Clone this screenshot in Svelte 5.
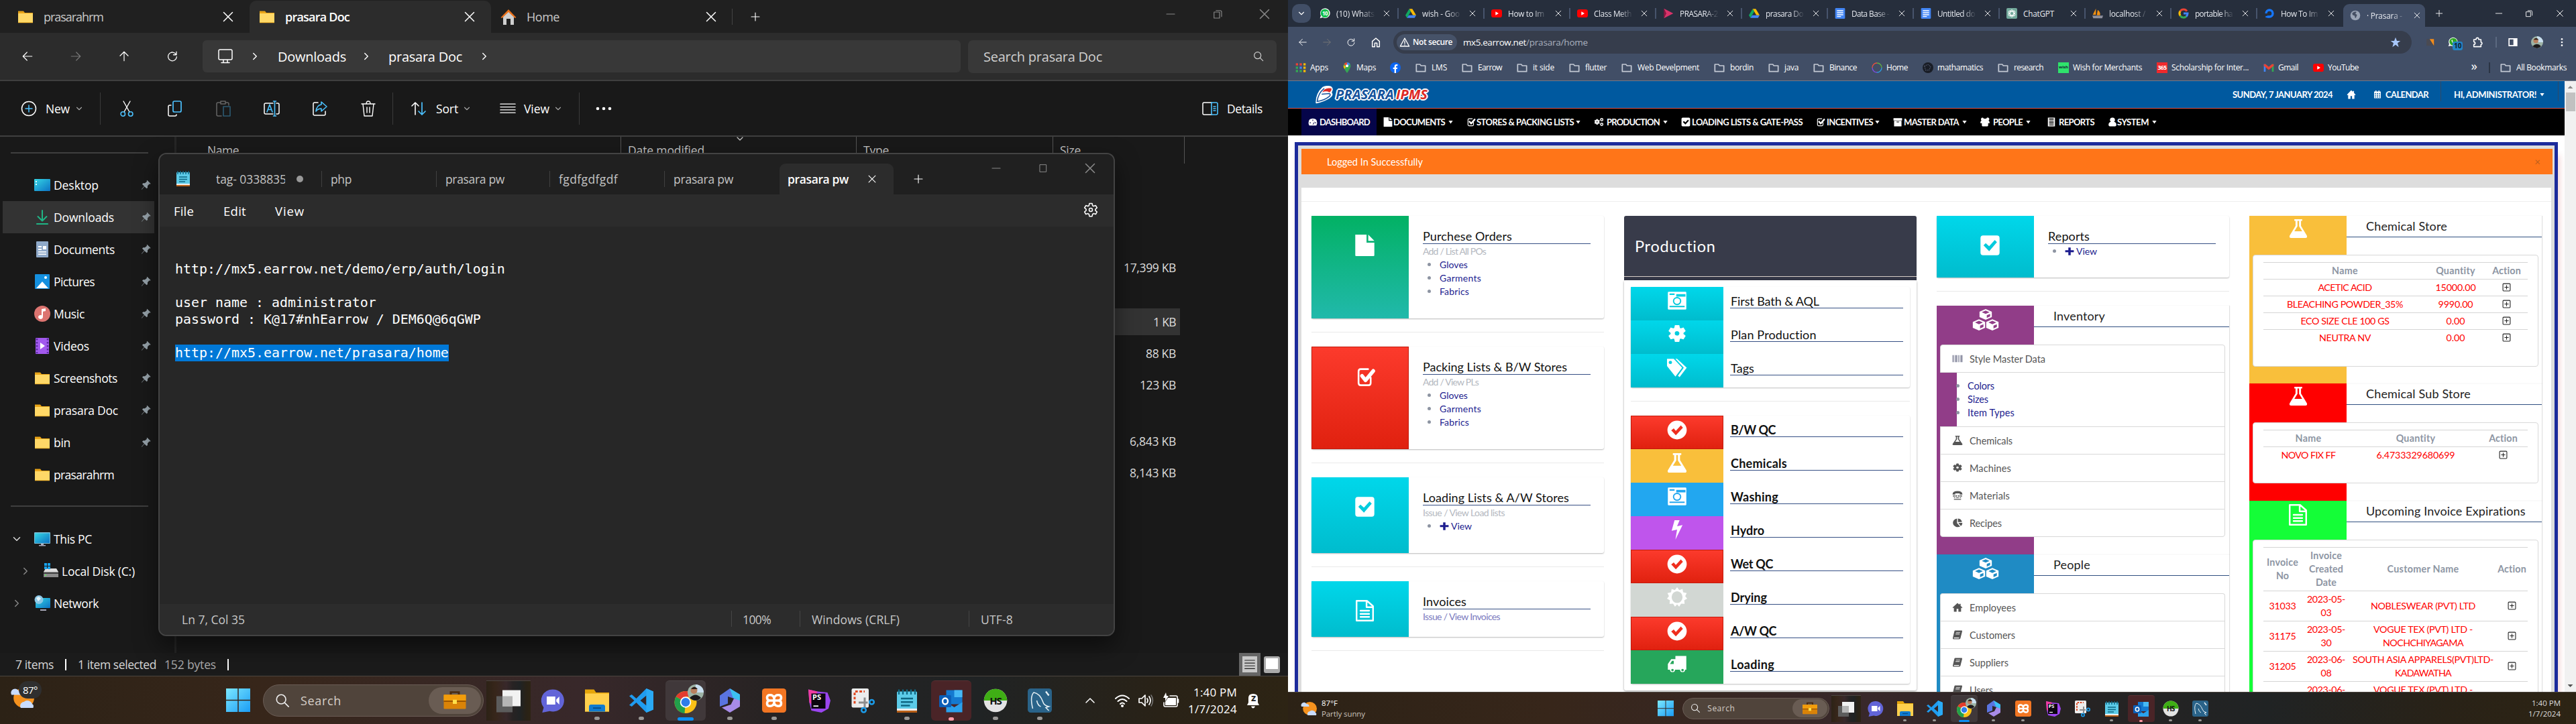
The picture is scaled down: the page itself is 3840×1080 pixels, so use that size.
<script>
  // Tightens or loosens tracking so a label occupies the given width.
  function fit(node, width) {
    if (!width) return;
    const range = document.createRange();
    range.selectNodeContents(node);
    const natural = range.getBoundingClientRect().width;
    const count = node.textContent.length;
    node.style.letterSpacing = ((width - natural) / count).toFixed(3) + 'px';
  }

  const line = (d, w = 1.5, c = 'currentColor') =>
    `<path d="${d}" fill="none" stroke="${c}" stroke-width="${w}" stroke-linecap="round" stroke-linejoin="round"/>`;
  const gearPath =
    'M10 1.500h4l.7 3.200 1.500.9 3.100-1 2 3.400-2.400 2.200v1.800l2.400 2.200-2 3.400-3.100-1-1.500.9-.7 3.200h-4l-.7-3.200-1.500-.9-3.100 1-2-3.400 2.400-2.200v-1.800L2.700 8l2-3.400 3.100 1 1.500-.9z';

  const icons = {
    folder: '<path d="M1 3.500h8l2 2.500h12v15H1z" fill="#e8a317"/><path d="M1 7h22v14H1z" fill="#ffd867"/><path d="M1 20h22v1.200H1z" fill="#f2b632"/>',
    house: '<path d="M4 10 12 4l8 6v14h-5v-9H9v9H4z" fill="#cfcfcf"/><path d="M0.500 13 12 1l11.500 12-2 1L12 5 2.500 14z" fill="#e8701a"/>',
    x: line('M5.500 5.500l13 13M18.500 5.500l-13 13'),
    plus: line('M12 4v16M4 12h16'),
    min: line('M4 12h16'),
    restore: line('M5 8h11v12H5zM9 5h8q3 0 3 3v9'),
    max: line('M5 4h14v16H5z'),
    back: line('M21 12H3M11 4l-8 8 8 8', 1.6),
    fwd: line('M3 12h18M13 4l8 8-8 8', 1.6),
    up: line('M12 21V3M4 11l8-8 8 8', 1.6),
    reload: line('M19.500 8.500A8.500 8.500 0 1 0 20.500 13M20 3v6h-6', 1.7),
    monitor: line('M4 2h16q2 0 2 2v11q0 2-2 2H4q-2 0-2-2V4q0-2 2-2zM9 17v4M15 17v4M6 21.500h12', 1.5),
    right: line('M9 6l6 6-6 6', 1.9),
    down: line('M6 9l6 6 6-6', 1.9),
    upc: line('M4 16l8-8 8 8', 2),
    search: line('M16 16l6 6M17.500 10a7.500 7.500 0 1 1-15 0 7.500 7.500 0 0 1 15 0z', 1.8),
    newc: line('M22.500 12a10.500 10.500 0 1 1-21 0 10.500 10.500 0 0 1 21 0z') + line('M12 7v10M7 12h10', 1.5, '#4cc2ff'),
    cut: line('M7 1l9 16M17 1L8 17', 1.4) + line('M9.500 20a3.200 3.200 0 1 1-6.400 0 3.200 3.200 0 0 1 6.400 0zM20.900 20a3.200 3.200 0 1 1-6.400 0 3.200 3.200 0 0 1 6.400 0z', 1.600, '#4cc2ff'),
    copy: line('M6 7H4q-2 0-2 2v12q0 2 2 2h8q2 0 2-2', 1.5) + line('M11 1h8q2 0 2 2v12q0 2-2 2h-8q-2 0-2-2V3q0-2 2-2z', 1.700, '#4cc2ff'),
    paste: line('M8 3H4q-2 0-2 2v16q0 2 2 2h5M16 3h2q2 0 2 2v2M8 1h7v4H8z', 1.5, '#666') + line('M12 9h10v14H12z', 1.6, '#2c5a72'),
    rename: line('M14 4H3q-2 0-2 2v12q0 2 2 2h11M19 4h2q2 0 2 2v12q0 2-2 2h-2', 1.5) + line('M5 17l4-11 4 11M6.500 13.500h5M16.500 1v22M14.500 1h4M14.500 23h4', 1.600, '#4cc2ff'),
    share: line('M9 3H4q-2 0-2 2v15q0 2 2 2h14q2 0 2-2v-4', 1.5) + line('M14 2l8 7-8 7v-4q-5 0-8 4 1-9 8-10z', 1.600, '#4cc2ff'),
    trash: line('M2 5h20M4 5l2 18h12l2-18M9 5q0-4 3-4t3 4M10 10v8M14 10v8', 1.4),
    sort: line('M7 21V3M2 8l5-5 5 5', 1.6) + line('M17 3v18M12 16l5 5 5-5', 1.700, '#4cc2ff'),
    lines: line('M1 4h22M1 9.500h22M1 15h22M1 20.500h22', 1.6),
    dots: '<g fill="currentColor"><circle cx="3" cy="12" r="2.300"/><circle cx="12" cy="12" r="2.300"/><circle cx="21" cy="12" r="2.300"/></g>',
    details: line('M14 3H3Q1 3 1 5v14q0 2 2 2h11', 1.5) + line('M14 3h7q2 0 2 2v14q0 2-2 2h-7zM17 9h3M17 12h3M17 15h3', 1.6, '#4cc2ff'),
    desktop: '<rect y="3" width="24" height="18" rx="1" fill="url(#gTeal)"/><path d="M2 6h2v2H2zM2 10h2v2H2z" fill="#d8fbff"/>',
    download: line('M12 2v15M5.500 11l6.500 6.500 6.500-6.500', 2, '#1fb585') + line('M4 22h16', 2.200, '#1fb585'),
    docs: '<rect x="3" width="18" height="24" rx="1" fill="#8fa9c9"/><path d="M6 7h5v2H6zM6 11h5v2H6zM13 7h5v5h-5zM6 15h12v1.600H6zM6 18.500h12v1.600H6z" fill="#fff"/>',
    pics: '<rect x="1" y="1" width="22" height="22" rx="1" fill="#1490df"/><path d="M3 22l9-10 9 10z" fill="#fff"/><circle cx="17" cy="6" r="2" fill="#fff"/>',
    music: '<circle cx="12" cy="12" r="12" fill="#dc7470"/><path d="M11 5l6-1v4l-4 .8V17a3.500 3 0 1 1-2-2.800z" fill="#fff"/>',
    video: '<rect x="2" width="20" height="24" rx="1" fill="#a259ee"/><path d="M9 7l7 5-7 5z" fill="#fff"/><path d="M4 1v22M20 1v22" stroke="#5a2ba0" stroke-width="2.500" stroke-dasharray="2.500 2.500"/>',
    pc: '<rect y="2" width="24" height="17" rx="1" fill="#7dbfd9"/><rect x="1" y="3.500" width="22" height="14.500" fill="url(#gTeal)"/><path d="M10 19h4v2h3v1.500H7V21h3z" fill="#aab"/>',
    disk: '<path d="M1 13h22v8H1z" fill="#8c8c8c"/><path d="M1 13l3-5h16l3 5z" fill="#dedede"/><path d="M1 14h22v2H1z" fill="#444"/><path d="M2 0h4v4H2zM7 0h4v4H7zM2 5h4v4H2zM7 5h4v4H7z" fill="#19a4f0"/><circle cx="4" cy="18" r="1" fill="#5f5"/>',
    net: '<rect x="2" y="4" width="22" height="15" rx="1" fill="url(#gTeal)"/><circle cx="7" cy="6.500" r="6.500" fill="#8cc8e6"/><path d="M3 4l4-2 3 3-4 4z" fill="#e5f5fc"/><path d="M9 21h9v2H9z" fill="#aab"/>',
    pin: '<path d="M14 1l8 8-2 1-1-.5-4 4.500v4l-2 2-5-4.500L2 22l-.500-.5 6-7L3 10l2-2h4L13.500 4 13 2.500z" fill="#97a3ab"/>',
    notepad: '<rect x="2" y="3" width="20" height="19" rx="1" fill="#5ccbe8"/><path d="M4 1v5M8 1v5M12 1v5M16 1v5M20 1v5" stroke="#0f6a86" stroke-width="1.500"/><path d="M6 10h12M6 13.500h12M6 17h9" stroke="#0e6783" stroke-width="1.600"/><path d="M2 20h20v2H2z" fill="#eee"/><path d="M2 22h20v2H2z" fill="#b85f17"/>',
    gear: line(gearPath, 1.6) + line('M14.500 11a2.500 2.500 0 1 1-5 0 2.500 2.500 0 0 1 5 0z', 1.5),
    gearf: `<path fill-rule="evenodd" d="${gearPath}M15.500 11a3.500 3.500 0 1 0-7 0 3.500 3.500 0 0 0 7 0z" fill="currentColor" stroke="currentColor" stroke-width="1.500"/>`,
    file: '<path d="M1 0H14v9h9v14q0 1-1 1H2q-1 0-1-1zM16 0l7 7H16z" fill="currentColor"/>',
    checko: line('M18 13v6q0 2.500-2.500 2.500h-9Q4 21.500 4 19V6q0-2.500 2.500-2.500H15', 2) + line('M8 11l4 5 9-10.500', 4.200),
    checks: '<path fill-rule="evenodd" d="M4 1h16q3 0 3 3v16q0 3-3 3H4q-3 0-3-3V4q0-3 3-3zM4.500 12l6.500 6.500L20 8.500l-2.500-2.500-6.500 7-4-3.500z" fill="currentColor"/>',
    filet: line('M2.500 1h12l7 6v16H2.500zM14 1v7h7M7 12h10M7 15.500h10M7 19h10', 1.9),
    washer: '<path fill-rule="evenodd" d="M2 1h20q1 0 1 1v20q0 1-1 1H2q-1 0-1-1V2q0-1 1-1zM3 3v2h6V3zM11 4v3h11V4zM3 20h18v-1.600H3zM17 12.500a5 5 0 1 0-10 0 5 5 0 0 0 10 0zM15.500 12.500a3.500 3.500 0 1 1-7 0 3.500 3.500 0 0 1 7 0z" fill="currentColor"/>',
    tags: '<path fill-rule="evenodd" d="M0 1h8l10 11-8 11L0 10zM6 5.500a2 2 0 1 0-4 0 2 2 0 0 0 4 0z" fill="currentColor"/><path d="M10 1h2l11.500 11-8.500 11.500-2-1.500 7-10z" fill="currentColor"/>',
    checkc: '<path fill-rule="evenodd" d="M23.500 12a11.500 11.500 0 1 1-23 0 11.500 11.500 0 0 1 23 0zM5 12.500l5.500 6L19 9l-2.500-2.800-6 6.800-2.500-3z" fill="currentColor"/>',
    flask: '<path fill-rule="evenodd" d="M7 0h10v2.200h-1.500V8.500L23 21q1 3-2 3H3q-3 0-2-3L8.500 8.500V2.200H7zM11 2.200V9L7 15.500h10L13 9V2.200z" fill="currentColor"/>',
    bolt: '<path d="M9 0h6l-3 7.500 6.500-1.500L10 24l2-12.500-6.500 1.500z" fill="currentColor"/>',
    sun: '<path fill-rule="evenodd" d="M12 0l2.600 3.500L18.500 2l.7 4.300 4.300.9-1.800 3.800L24 14l-3.500 2.200.5 4.300-4.200-.2L14.500 24 12 21.200 9.500 24l-2.300-3.700-4.200.2.500-4.300L0 14l2.300-3L.5 7.200l4.300-.9L5.500 2l3.900 1.500zM18.500 12.200a6.500 7.300 0 1 0-13 0 6.500 7.300 0 0 0 13 0z" fill="currentColor"/>',
    truck: '<path fill-rule="evenodd" d="M10 2h13v17h-1.500a3 3 0 0 1-6 0H9.500a3 3 0 0 1-6 0H1v-7l4-6h5zM3.500 12H8V8H6z" fill="currentColor"/><circle cx="6.500" cy="19.500" r="1.500" fill="#26a65b"/><circle cx="18.500" cy="19.500" r="1.500" fill="#26a65b"/>',
    cubes: '<path fill="currentColor" d="M12 0l5.500 3v6L12 12 6.500 9V3zM6 11.500l5.500 3v6.500L6 24 .5 21v-6.500zM18 11.500l5.500 3v6.500L18 24l-5.500-3v-6.500z"/><g fill="var(--tile)"><path d="M12 1.700l3.500 1.800L12 5.400 8.500 3.500zM13 7l3-1.600v2.800L13 10zM6 13.200l3.500 1.800L6 17l-3.500-2zM7 18.600L10 17v3l-3 1.700zM18 13.200l3.500 1.800-3.500 2-3.500-2zM19 18.600l3-1.600v3l-3 1.700z"/></g>',
    barcode: '<path d="M1 3h2v18H1zM4 3h1v18H4zM7 3h3v18H7zM11 3h1v18h-1zM14 3h2v18h-2zM18 3h1v18h-1zM20 3h3v18h-3z" fill="#7d7f96"/>',
    tty: '<path d="M1 9q0-8 11-8t11 8v1h-6V7H7v3H1zM2 12h4v3H2zM7 12h4v3H7zM13 12h4v3h-4zM18 12h4v3h-4zM4 17h3v2H4zM9 17h6v2H9zM17 17h3v2h-3zM4 21h16v2H4z" fill="currentColor"/>',
    pie: '<path d="M11 1v11.500l7 9A11 11 0 1 1 11 1z" fill="currentColor"/><path d="M13 1q8 1 9 9h-9zM14 12h9q0 5-3.500 8z" fill="currentColor"/>',
    home: '<path d="M12 1l4 4V3h3v5l4 4.500-1.500 1.500L20 12.500V23h-6v-7h-4v7H4V12.500L2.500 14 1 12.500z" fill="currentColor"/>',
    book: '<path fill-rule="evenodd" d="M7 1h14q2 0 1.500 2l-4 18q-.5 2-2.500 2H3q-2 0-1.500-3L5 3q.5-2 2-2zM9 5l-.5 1.500h9L18 5zM8 9l-.5 1.500h9L17 9zM4 19v2h11l1-2z" fill="currentColor"/>',
    plusb: '<path d="M9 2h6v7h8v5h-8v8H9v-8H1V9h8z" fill="currentColor"/>',
    plussq: line('M4 2h16q2 0 2 2v16q0 2-2 2H4q-2 0-2-2V4q0-2 2-2zM12 7v10M7 12h10', 2),
    dash: '<path fill-rule="evenodd" d="M1 14Q1 3 12 3t11 11q0 4-2 7H3q-2-3-2-7zM11 6v3h2V6zM4 13v2h3v-2zM17 13v2h3v-2zM11 18h3l3-8-4 6z" fill="currentColor"/>',
    cogs: `<g transform="scale(.68) translate(0 6)"><path fill-rule="evenodd" d="${gearPath}M15 11a3 3 0 1 0-6 0 3 3 0 0 0 6 0z" fill="currentColor" stroke="currentColor" stroke-width="2"/></g><circle cx="20" cy="6" r="3" stroke="currentColor" stroke-width="2.500" fill="none"/><circle cx="20" cy="18" r="3" stroke="currentColor" stroke-width="2.500" fill="none"/>`,
    box: '<path fill-rule="evenodd" d="M1 2h22v6H1zM2.500 9h19v14h-19zM9 11v2h6v-2z" fill="currentColor"/>',
    people: '<path d="M6 1a4 4 0 0 1 3 3q3-2 6 0a4 4 0 1 1 6 4q3 2 3 7h-4v6q0 2-2 2H6q-2 0-2-2v-6H0q0-5 3-7a4 4 0 0 1 3-7z" fill="currentColor"/>',
    server: '<path fill-rule="evenodd" d="M3 1h18v22H3zM6 3v3h12V3zM6 8.500v2h12v-2zM6 13v3h12v-3zM6 18.500v2h12v-2z" fill="currentColor"/>',
    person: '<path d="M12 1a5.500 5.500 0 0 1 4 10q6 2 6 8 0 4-3 4H5q-3 0-3-4 0-6 6-8a5.500 5.500 0 0 1 4-10z" fill="currentColor"/>',
    cal: '<path fill-rule="evenodd" d="M2 3h20v20H2zM4 8v2.500h3.500V8zM10 8v2.500h4V8zM16.500 8v2.500H20V8zM4 13v2.500h3.500V13zM10 13v2.500h4V13zM16.500 13v2.500H20V13zM4 18v2.500h3.500V18zM10 18v2.500h4V18zM16.500 18v2.500H20V18zM6 0h3v3H6zM15 0h3v3h-3z" fill="currentColor"/>',
    fold: line('M2 4.500h8l2.500 3H22v13H2z', 2.600, '#c3c9d4'),
    whats: '<path d="M1 23l2-6A11 11 0 1 1 7 21z" fill="#fff"/><circle cx="12" cy="11.700" r="9.500" fill="#0fc04b"/>',
    drive: '<path d="M8.500 2h7L24 16h-7z" fill="#fbbc04"/><path d="M8.500 2L0 16l3.500 6L12 8z" fill="#11a861"/><path d="M7.500 16H24l-3.500 6h-17z" fill="#4285f4"/>',
    yt: '<rect y="3" width="24" height="18" rx="5" fill="#f00"/><path d="M9.500 8l7 4-7 4z" fill="#fff"/>',
    pras: '<path d="M2 1l21 11L2 23l5-11z" fill="#d9336a"/><path d="M2 1l5 11-5 11z" fill="#8c1640"/>',
    gdoc: '<rect x="1" width="22" height="24" rx="2" fill="#4285f4"/><path d="M5 6h14M5 10.500h14M5 15h14M5 19h9" stroke="#fff" stroke-width="2"/>',
    gpt: '<rect width="24" height="24" rx="3" fill="#74aa9c"/><g fill="none" stroke="#fff" stroke-width="1.400"><ellipse cx="12" cy="12" rx="4" ry="8"/><ellipse cx="12" cy="12" rx="4" ry="8" transform="rotate(60 12 12)"/><ellipse cx="12" cy="12" rx="4" ry="8" transform="rotate(120 12 12)"/></g>',
    sail: '<path d="M8 1v14H1zM12 4q7 5 5 12h-7z" fill="#f29111"/><path d="M0 17h24l-2 6H2z" fill="#8d8f9c"/>',
    google: '<g fill="none" stroke-width="4.500"><path d="M19.500 7A9 9 0 0 0 4.500 7" stroke="#ea4335"/><path d="M4.500 7a9 9 0 0 0 0 10" stroke="#fbbc05"/><path d="M4.500 17a9 9 0 0 0 13.500 2" stroke="#34a853"/><path d="M18 19q3-3 3-7h-9" stroke="#4285f4"/></g>',
    ocean: '<path d="M12 2a10 10 0 1 1 0 20v-5a5 5 0 1 0-5-5H2A10 10 0 0 1 12 2z" fill="#1677ff"/><path d="M7 17h5v5H7zM3.500 18H7v3.500H3.500z" fill="#1677ff"/>',
    globe: '<circle cx="12" cy="12" r="11" fill="#9aa4b5"/><path d="M5 7q6-5 10-3l-3 4 4 3-3 7q-3-1-2-5l-5-2z" fill="#454f63"/>',
    homeo: line('M4 10l8-7 8 7v12h-5.500v-8h-5v8H4z', 2.2),
    warn: line('M12 3L2 21h20zM12 9v6M12 18v.2', 2),
    star: '<path d="M12 1l3 8h8l-6.500 5L19 23l-7-5.500L5 23l2.500-9L1 9h8z" fill="#a8c7fa"/>',
    ext: '<rect x="2" y="4" width="20" height="17" fill="#4a4a52"/><path d="M10 4h11v17z" fill="#f28c1c"/>',
    wh: '<path d="M1 21l2-5A10 10 0 1 1 7 20z" fill="#fff"/><circle cx="12" cy="11" r="8.500" fill="#2ea721"/><path d="M8 7q1 8 8 8l1-2-3-1.500-1 1q-2-1-3-3l1-1-1-2z" fill="#fff"/>',
    puzzle: line('M4 6h5q0-4 3-4t3 4h5v6q2.500 0 2.500 2.500T20 17v5H4v-5q3 0 3-2.800T4 11z', 2.400),
    side: '<path fill-rule="evenodd" d="M2 3h20v18H2zM4.500 5.500v13H13v-13z" fill="#fff"/>',
    avatar: '<circle cx="12" cy="12" r="12" fill="#9db3a6"/><path d="M12 0a12 12 0 0 1 12 12H12z" fill="#c9dff0"/><path d="M3 20q9-9 17 0-8 8-17 0z" fill="#1d1a1c"/><circle cx="9.500" cy="9" r="5" fill="#b9805f"/><path d="M5 7q5-7 10 0z" fill="#2b1d18"/>',
    menu: '<g fill="#fff"><circle cx="12" cy="4" r="2.300"/><circle cx="12" cy="12" r="2.300"/><circle cx="12" cy="20" r="2.300"/></g>',
    apps: '<path d="M1 2h5v5H1z" fill="#ea4335"/><path d="M9.500 2h5v5h-5z" fill="#ea4335"/><path d="M18 2h5v5h-5z" fill="#fbbc04"/><path d="M1 9.500h5v5H1z" fill="#34a853"/><path d="M9.500 9.500h5v5h-5z" fill="#4285f4"/><path d="M18 9.500h5v5h-5z" fill="#fbbc04"/><path d="M1 17h5v5H1z" fill="#34a853"/><path d="M9.500 17h5v5h-5z" fill="#34a853"/><path d="M18 17h5v5h-5z" fill="#fbbc04"/>',
    map: '<path d="M12 0a8 8 0 0 1 8 8q0 5-8 16Q4 13 4 8a8 8 0 0 1 8-8z" fill="#34a853"/><path d="M12 0a8 8 0 0 0-7 4l7 5z" fill="#ea4335"/><path d="M12 0a8 8 0 0 1 7 4l-7 5z" fill="#4285f4"/><path d="M4.500 6l5 4-3 5Q3 10 4.500 6z" fill="#fbbc04"/><circle cx="12" cy="8" r="3" fill="#fff"/>',
    fb: '<circle cx="12" cy="12" r="12" fill="#0b66f2"/><path d="M10 24v-9H7v-3.500h3V9q0-4.500 4.500-4.500H17V8h-2q-1.500 0-1.500 1.500v2h3.300L16 15h-2.500v9z" fill="#fff"/>',
    ring: '<g fill="none" stroke-width="2"><path d="M12 1.500a10.500 10.500 0 0 0-10.500 10.500" stroke="#f0503c"/><path d="M12 1.500A10.500 10.500 0 0 1 22.500 12" stroke="#5fb043"/><path d="M1.500 12A10.500 10.500 0 0 0 12 22.500" stroke="#7a4fe0"/><path d="M22.500 12A10.500 10.500 0 0 1 12 22.500" stroke="#2d9be0"/></g>',
    ball: '<circle cx="12" cy="12" r="12" fill="#191d26"/><path d="M4 8l8-3 6 4-3 8-8 1z" fill="none" stroke="#67708a" stroke-width="1.500" stroke-dasharray="2 2"/>',
    gmail: '<path d="M1 4h4v17H1z" fill="#4285f4"/><path d="M19 4h4v17h-4z" fill="#34a853"/><path d="M1 4l4 0 7 6 7-6h4v4l-11 9L1 8z" fill="#ea4335"/>',
    weather: '<circle cx="14" cy="12" r="10" fill="#f5921e"/><path d="M2 9a4 4 0 0 1 7-4q4 0 4 4z" fill="#c8dcff"/><path d="M11 22a4 4 0 0 1 3-6 5 5 0 0 1 8 2q2 1 1 4z" fill="#c8dcff"/>',
    win: '<g fill="url(#gWin)"><path d="M0 0h11.500v11.500H0zM12.500 0H24v11.500H12.500zM0 12.500h11.500V24H0zM12.500 12.500H24V24H12.500z"/></g>',
    brief: '<path d="M8 5V2h8v3" fill="none" stroke="#4b2b10" stroke-width="2"/><rect x="1" y="5" width="22" height="17" rx="1" fill="#d98308"/><path d="M1 5h22v7H1z" fill="#f29d0c"/><path d="M1 12h22v1.500H1z" fill="#9c5500"/><rect x="10" y="11" width="4" height="5" fill="#ffe04a"/>',
    task: '<path d="M0 7h16v16H0z" fill="#5c5c5c"/><path d="M6 1h18v16H6z" fill="#f2f2f2"/><path d="M6 7h10v10H6z" fill="#b5b5b5"/>',
    chat: '<path d="M12 1a11 11 0 1 1-3 21.500L1.500 24 3 19A11 11 0 0 1 12 1z" fill="#6264d8"/><path d="M6 8h8.500v8H6zM15.500 11l3-3v8l-3-3z" fill="#fff"/>',
    expl: '<path d="M0 1h9l2 3h13v19H0z" fill="#e5a50a"/><path d="M0 5h24v18H0z" fill="#ffd04d"/><path d="M4 23v-5q0-2 2-2h12q2 0 2 2v5z" fill="#0f7bd0"/><path d="M8 19.500h8" stroke="#064a84" stroke-width="1.200"/>',
    code: '<path d="M17 0l7 3v18l-7 3L7 14l-4.500 4L0 16.500 5 12 0 7.500 2.500 6 7 10zM17 7l-6 5 6 5z" fill="#1f9cf0" fill-rule="evenodd"/><path d="M17 0l7 3v18l-7 3z" fill="#2aaaf5"/>',
    chrome: '<circle cx="12" cy="13" r="11" fill="#fbc116"/><path d="M12 13L2.500 7.500A11 11 0 0 1 21.500 7.500H12z" fill="#e33b2e"/><path d="M12 13l-1 11A11 11 0 0 1 2.500 7.500z" fill="#22a04b"/><circle cx="12" cy="13" r="5.500" fill="#fff"/><circle cx="12" cy="13" r="4.300" fill="#2f7de9"/>',
    m365: '<path d="M12 0l10 6v7l-6-3-6-2v7L2 18V7z" fill="#5a74e0"/><path d="M12 0l10 6v7l-7-4z" fill="#3cc0f2"/><path d="M22 12v6l-10 6-8-5 9-3 3-6z" fill="#a88be8"/>',
    xampp: '<rect width="24" height="24" rx="3" fill="#f37623"/><path d="M8 6.500q-3 0-3 2.700T8 12q-3 0-3 2.800t3 2.700 4-3V9.500q1-3 4-3t3 2.700T16 12q3 0 3 2.800t-3 2.700-4-3V9.500q-1-3-4-3zM8 12h8" fill="none" stroke="#fff" stroke-width="2.400"/>',
    ps: '<path d="M2 1l9 2 10 1 3 8-2 8-7 4-10-2-2-8z" fill="#9b45f0"/><path d="M2 1l9 2-5 13-3-2z" fill="#f03ca0"/><rect x="5" y="5" width="14" height="15" fill="#0b0610"/><path d="M7 17.500h5" stroke="#fff" stroke-width="1.200"/>',
    snip: '<rect x="1" width="17" height="19" rx="1.500" fill="#ececec"/><path d="M4 15V3h10" fill="none" stroke="#e0461f" stroke-width="2" stroke-dasharray="2.500 1.700"/><path d="M14 9v10M8 14h9" stroke="#8d8d8d" stroke-width="2"/><circle cx="21" cy="13.500" r="2.200" fill="none" stroke="#1b9be8" stroke-width="1.700"/><circle cx="13" cy="21.500" r="2.200" fill="none" stroke="#1b9be8" stroke-width="1.700"/>',
    outlook: '<path d="M7 1h16v14H7z" fill="#1479d0"/><path d="M15 1h8v7h-8z" fill="#47b8f5"/><path d="M7 13l8 5 8-5v10H7z" fill="#2aa0ec"/><rect y="6" width="12" height="12" rx="1" fill="#0c5fb8"/><ellipse cx="6" cy="12" rx="2.600" ry="3" fill="none" stroke="#fff" stroke-width="1.600"/>',
    hs: '<circle cx="12" cy="12" r="11.500" fill="#e3e3e3"/><path d="M.5 12a11.500 11.500 0 0 1 23 0z" fill="#3fae15"/>',
    mysql: '<rect width="24" height="24" rx="3" fill="#2a6389"/><path d="M5 20Q2 8 6 4q6 1 9 9 1 4 6 5l-3 1 3 3M9 12q1 5 4 6" fill="none" stroke="#e6f0f5" stroke-width="1"/><path d="M18 3l3 4" stroke="#e6f0f5" stroke-width="1.600"/>',
    wifi: line('M2 9q10-9 20 0M5.500 13q6.500-6 13 0M9 17q3-3 6 0', 2) + '<circle cx="12" cy="20" r="2" fill="currentColor"/>',
    sound: line('M2 9h4l5-5v16l-5-5H2zM14 9q2 3 0 6M17 6q4 6 0 12', 1.7) + line('M20 4q5 8 0 16', 1.500, '#777'),
    batt: '<path fill="currentColor" d="M8 8h12v11H4v-5z"/>' + line('M11 5h9q2 0 2 2v12q0 2-2 2H4q-2 0-2-2v-4M23.500 10v5', 1.6) + '<path d="M5 0L1 8h3v5l5-8H6z" fill="currentColor"/>',
    bell: '<path d="M5 8q0-6 7-6t7 6v7l2 4H3l2-4zM9 20.500h6q-1 3-3 3t-3-3z" fill="currentColor"/>'
  };

  const quick = [
    ['desktop', 'Desktop', 67], ['download', 'Downloads', 90], ['docs', 'Documents', 91], ['pics', 'Pictures', 61],
    ['music', 'Music', 46], ['video', 'Videos', 53], ['folder', 'Screenshots', 95], ['folder', 'prasara Doc', 96],
    ['folder', 'bin', 25], ['folder', 'prasarahrm', 90]
  ];
  const noteTabs = [['php', 31, 171], ['prasara pw', 88, 169], ['fgdfgdfgdf', 88, 171], ['prasara pw', 89, 172]];
  const toolIcons = ['cut', 'copy', 'paste', 'rename', 'share', 'trash'];
  const apps = ['task', 'chat', 'expl', 'code', 'chrome', 'm365', 'xampp', 'ps', 'snip', 'notepad', 'outlook', 'hs', 'mysql'];
  const running = ['expl', 'code', 'm365', 'xampp', 'notepad', 'outlook', 'hs', 'mysql'];

  const webTabs = [
    ['whats', '(10) Whats', 57], ['drive', 'wish - Goo', 56], ['yt', 'How to Im', 54], ['yt', 'Class Meth', 56],
    ['pras', 'PRASARA-2', 57], ['drive', 'prasara Do', 56], ['gdoc', 'Data Base -', 56], ['gdoc', 'Untitled do', 56],
    ['gpt', 'ChatGPT', 46], ['sail', 'localhost /', 54], ['google', 'portable ha', 56], ['ocean', 'How To Im', 55]
  ];
  const marks = [
    ['apps', 'Apps', 27], ['map', 'Maps', 29], ['fb', '', 0], ['fold', 'LMS', 23], ['fold', 'Earrow', 36], ['fold', 'it side', 32],
    ['fold', 'flutter', 32], ['fold', 'Web Develpment', 92], ['fold', 'bordin', 35], ['fold', 'java', 21], ['fold', 'Binance', 41],
    ['ring', 'Home', 32], ['ball', 'mathamatics', 68], ['fold', 'research', 44], ['wish', 'Wish for Merchants', 103],
    ['n365', 'Scholarship for Inter...', 115], ['gmail', 'Gmail', 30], ['yt', 'YouTube', 46]
  ];
  // icon, icon advance, label, label width, caret gap (0 = no caret)
  const menu = [
    ['dash', 17, 'DASHBOARD', 75, 0], ['file', 15, 'DOCUMENTS', 77, 5], ['checko', 15, 'STORES & PACKING LISTS', 145, 3],
    ['cogs', 19, 'PRODUCTION', 79, 5], ['checks', 16, 'LOADING LISTS & GATE-PASS', 165, 0], ['checko', 16, 'INCENTIVES', 69, 3],
    ['box', 16, 'MASTER DATA', 82, 5], ['people', 19, 'PEOPLE', 44, 5], ['server', 18, 'REPORTS', 53, 0], ['person', 14, 'SYSTEM', 47, 5]
  ];
  const three = [['Gloves', 42], ['Garments', 62], ['Fabrics', 44]];
  const cards = [
    { cls: 'green h153', icon: 'file', title: 'Purchese Orders', w: 133, sub: 'Add / List All POs', sw: 94, items: three },
    { cls: 'red h153', icon: 'checko', title: 'Packing Lists & B/W Stores', w: 215, sub: 'Add / View PLs', sw: 83, items: three },
    { cls: 'cyan h113', icon: 'checks', title: 'Loading Lists & A/W Stores', w: 218, sub: 'Issue / View Load lists', sw: 122, view: true },
    { cls: 'cyan h83', icon: 'filet', title: 'Invoices', w: 65, sub: 'Issue / View Invoices', sw: 115, link: true }
  ];
  const prep = [['cyan', 'washer', 'First Bath & AQL', 132], ['cyan', 'gearf', 'Plan Production', 128], ['cyan', 'tags', 'Tags', 35]];
  const steps = [
    ['red', 'checkc', 'B/W QC', 67], ['amber', 'flask', 'Chemicals', 84], ['sky', 'washer', 'Washing', 71], ['violet', 'bolt', 'Hydro', 50],
    ['red', 'checkc', 'Wet QC', 63], ['grey', 'sun', 'Drying', 54], ['red', 'checkc', 'A/W QC', 68], ['leaf', 'truck', 'Loading', 65]
  ];
  const stock = [['flask', 'Chemicals', 64], ['gearf', 'Machines', 62], ['tty', 'Materials', 60], ['pie', 'Recipes', 48]];
  const folk = [['home', 'Employees', 69], ['book', 'Customers', 68], ['book', 'Suppliers', 58], ['book', 'Users', 35]];
  const chem = [
    ['ACETIC ACID', 80, '15000.00', 60], ['BLEACHING POWDER_35%', 173, '9990.00', 52],
    ['ECO SIZE CLE 100 GS', 132, '0.00', 28], ['NEUTRA NV', 77, '0.00', 28]
  ];
  const invoices = [
    ['31033', '2023-05-', '03', [['NOBLESWEAR (PVT) LTD', 156]]],
    ['31175', '2023-05-', '30', [['VOGUE TEX (PVT) LTD -', 148], ['NOCHCHIYAGAMA', 120]]],
    ['31205', '2023-06-', '08', [['SOUTH ASIA APPARELS(PVT)LTD-', 210], ['KADAWATHA', 84]]],
    ['31206', '2023-06-', '08', [['VOGUE TEX (PVT) LTD -', 148], ['NOCHCHIYAGAMA', 120]]]
  ];
</script>

{#snippet ic(name, cls = 'i20')}<svg class="ic {cls}" viewBox="0 0 24 24" preserveAspectRatio="none">{@html icons[name]}</svg>{/snippet}
{#snippet t(text, w = 0, cls = '')}<span class="t {cls}" use:fit={w}>{text}</span>{/snippet}

{#snippet tray(big)}
  <div class="dock">
    <div class="logo">{@render ic('win', 'full')}</div>
    <div class="pill">
      <div class="lens">{@render ic('search', 'full')}</div>
      {@render t('Search', big ? 61 : 41)}
      <div class="case"><div class="caseicon">{@render ic('brief', 'full')}</div></div>
    </div>
    <div class="apps">
      {#each apps as a}
        <div class="app {a}">
          <div class="appicon">
            {@render ic(a, 'full')}
            {#if a === 'ps'}<b class="psmark">PS</b>{/if}
            {#if a === 'hs'}<b class="hsmark">HS</b>{/if}
            {#if a === 'chrome'}<div class="face">{@render ic('avatar', 'full')}</div>{/if}
          </div>
          <i class="dot" class:on={running.includes(a)} class:wide={a === 'chrome'}></i>
        </div>
      {/each}
    </div>
  </div>
{/snippet}

{#snippet navrow(icon, label, w)}
  <div class="navrow"><span class="ni">{@render ic(icon, 'i24')}</span>{@render t(label, w)}</div>
{/snippet}

{#snippet step(s, strong)}
  <div class="step">
    <div class="stile {s[0]}">{@render ic(s[1], 'w32')}</div>
    <div class="sbody"><div class="stitle" class:strong>{@render t(s[2], s[3])}</div></div>
  </div>
{/snippet}

<svg class="defs" width="0" height="0">
  <defs>
    <linearGradient id="gTeal" x1="0" y1="0" x2="1" y2="1"><stop offset="0" stop-color="#35d6e4" /><stop offset="1" stop-color="#0c72c4" /></linearGradient>
    <linearGradient id="gWin" x1="0" y1="0" x2="1" y2="1"><stop offset="0" stop-color="#7ce8ff" /><stop offset="1" stop-color="#1a9cf5" /></linearGradient>
  </defs>
</svg>

<div class="desk">
  <section class="screen left">
    <div class="ftabs">
      <div class="ftab">{@render ic('folder', 'i24')}{@render t('prasarahrm', 89)}{@render ic('x', 'i24 end')}</div>
      <div class="ftab on">{@render ic('folder', 'i24')}{@render t('prasara Doc', 96)}{@render ic('x', 'i24 end')}</div>
      <div class="ftab last">{@render ic('house', 'i24')}{@render t('Home', 49)}{@render ic('x', 'i24 end')}</div>
      <div class="cell plus">{@render ic('plus', 'i20')}</div>
      <div class="wctl">
        <div class="cell">{@render ic('min', 'i20')}</div>
        <div class="cell">{@render ic('restore', 'i20')}</div>
        <div class="cell">{@render ic('x', 'i24')}</div>
      </div>
    </div>
    <div class="fnav">
      <div class="cell">{@render ic('back', 'i20')}</div>
      <div class="cell dim">{@render ic('fwd', 'i20')}</div>
      <div class="cell">{@render ic('up', 'i20')}</div>
      <div class="cell">{@render ic('reload', 'i20')}</div>
      <div class="addr">
        {@render ic('monitor', 'i24')}{@render ic('right', 'i20')}{@render t('Downloads', 102)}{@render ic('right', 'i20')}{@render t('prasara Doc', 110)}{@render ic('right', 'i20')}
      </div>
      <div class="find">{@render t('Search prasara Doc', 177)}{@render ic('search', 'i16')}</div>
    </div>
    <div class="ftools">
      {@render ic('newc', 'i24')}{@render t('New', 36)}{@render ic('down', 'i16')}<i class="bar"></i>
      {#each toolIcons as n}<div class="cell">{@render ic(n, 'i24')}</div>{/each}
      <i class="bar"></i>{@render ic('sort', 'i24')}{@render t('Sort', 33)}{@render ic('down', 'i16')}
      {@render ic('lines', 'i24 flat')}{@render t('View', 38)}{@render ic('down', 'i16')}<i class="bar"></i>
      {@render ic('dots', 'i24')}{@render ic('details', 'i24')}{@render t('Details', 53)}
    </div>
    <div class="fmain">
      <aside>
        <hr class="top" />
        {#each quick as q, n}
          <div class="qrow" class:sel={n === 1}>
            {@render ic(q[0], 'i24')}{@render t(q[1], q[2])}
            {#if n < 9}{@render ic('pin', 'i16 end')}{/if}
          </div>
        {/each}
        <hr class="mid" />
        <div class="tree open">{@render ic('down', 'i20')}{@render ic('pc', 'i24')}{@render t('This PC', 57)}</div>
        <div class="tree sub">{@render ic('right', 'i20')}{@render ic('disk', 'i24')}{@render t('Local Disk (C:)', 109)}</div>
        <div class="tree">{@render ic('right', 'i20')}{@render ic('net', 'i24')}{@render t('Network', 67)}</div>
      </aside>
      <div class="files">
        <div class="fhead">
          <span>{@render t('Name', 47)}</span><span>{@render t('Date modified', 114)}<em>{@render ic('down', 'i16')}</em></span><span>{@render t('Type', 38)}</span><span>{@render t('Size', 31)}</span>
        </div>
        <div class="sizes">
          <p>{@render t('17,399 KB', 78)}</p>
          <p class="pick">{@render t('1 KB', 34)}</p>
          <p>{@render t('88 KB', 45)}</p>
          <p>{@render t('123 KB', 54)}</p>
          <p>{@render t('6,843 KB', 69)}</p>
          <p>{@render t('8,143 KB', 69)}</p>
        </div>
      </div>
    </div>
    <div class="fstat">
      {@render t('7 items', 57)}<i></i>{@render t('1 item selected', 117)}{@render t('152 bytes', 77, 'faint')}<i></i>
      <div class="modes"><b class="m1">{@render ic('lines', 'full')}</b><b class="m2"></b></div>
    </div>

    <div class="note">
      <div class="ntabs">
        <div class="nicon">{@render ic('notepad', 'i24')}</div>
        <div class="ntab first">{@render t('tag- 0338835', 105, 'clip')}<i class="bullet"></i></div>
        {#each noteTabs as n, k}<div class="ntab n{k}">{@render t(n[0], n[1])}</div>{/each}
        <div class="ntab on">{@render t('prasara pw', 91)}{@render ic('x', 'i20')}</div>
        <div class="cell nplus">{@render ic('plus', 'i20')}</div>
        <div class="wctl">
          <div class="cell">{@render ic('min', 'i20')}</div>
          <div class="cell">{@render ic('max', 'i16')}</div>
          <div class="cell">{@render ic('x', 'i24')}</div>
        </div>
      </div>
      <div class="nmenu">{@render t('File', 30)}{@render t('Edit', 34)}{@render t('View', 44)}{@render ic('gear', 'i24')}</div>
      <div class="ntext">
        <p>http://mx5.earrow.net/demo/erp/auth/login</p>
        <p></p>
        <p>user name : administrator</p>
        <p>password : K@17#nhEarrow / DEM6Q@6qGWP</p>
        <p></p>
        <p><mark>http://mx5.earrow.net/prasara/home</mark></p>
      </div>
      <div class="nstat">{@render t('Ln 7, Col 35', 94)}{@render t('100%', 42)}{@render t('Windows (CRLF)', 131)}{@render t('UTF-8', 48)}</div>
    </div>

    <footer class="task big">
      <div class="wx"><div class="wxi">{@render ic('weather', 'full')}</div><b>87°</b></div>
      {@render tray(true)}
      <div class="sys">
        {@render ic('upc', 'i20')}{@render ic('wifi', 'i24')}{@render ic('sound', 'i24')}{@render ic('batt', 'i24')}
        <div class="clock">{@render t('1:40 PM', 65)}{@render t('1/7/2024', 73)}</div>
        <div class="bell">{@render ic('bell', 'i24')}<b>z</b></div>
      </div>
    </footer>
  </section>

  <section class="screen right">
    <div class="web">
      <div class="wtabs">
        <div class="drop">{@render ic('down', 'i14')}</div>
        {#each webTabs as w, n}
          <div class="wtab">{@render ic(w[0], 'i16')}{#if n === 0}<b class="ten">10</b>{/if}<span class="fade" class:whole={n === 8}>{@render t(w[1], w[2])}</span>{@render ic('x', 'i14')}</div>
        {/each}
        <div class="wtab on">{@render ic('globe', 'i16')}<span class="fade">{@render t('· Prasara -', 53)}</span>{@render ic('x', 'i14')}</div>
        <div class="wplus">{@render ic('plus', 'i14')}</div>
        <div class="wwin">{@render ic('min', 'i14')}{@render ic('restore', 'i14')}{@render ic('x', 'i16')}</div>
      </div>
      <div class="wnav">
        {@render ic('back', 'i14')}{@render ic('fwd', 'i14 dim')}{@render ic('reload', 'i14')}{@render ic('homeo', 'i16')}
        <div class="omni">
          <div class="chip">{@render ic('warn', 'i16')}{@render t('Not secure', 59)}</div>
          {@render t('mx5.earrow.net', 94)}{@render t('/prasara/home', 92, 'path')}
          {@render ic('star', 'i16 end')}
        </div>
        <div class="exts">
          {@render ic('ext', 'i14')}<div class="whx">{@render ic('wh', 'i16')}<b>10</b></div>{@render ic('puzzle', 'i16')}<i></i>{@render ic('side', 'i16')}{@render ic('avatar', 'i20')}{@render ic('menu', 'i14')}
        </div>
      </div>
      <div class="marks">
        {#each marks as m}
          <div class="mark" class:f={m[0] === 'fold'}>
            {#if m[0] === 'wish'}<b class="wish">wish</b>{:else if m[0] === 'n365'}<b class="n365">365</b>{:else}{@render ic(m[0], 'i16')}{/if}
            {#if m[1]}{@render t(m[1], m[2])}{/if}
          </div>
        {/each}
        <span class="more">»</span><i class="mdiv"></i>
        <div class="mark f">{@render ic('fold', 'i16')}{@render t('All Bookmarks', 75)}</div>
      </div>
      <div class="view">
        <div class="page">
          <header>
            <div class="brand">
              <svg class="blogo" viewBox="0 0 30 28"><path d="M2 26Q2 12 12 3q6-3 12-1 4 3 0 8 4 4-2 8-8 5-20 8z" fill="#fff" stroke="#fff" stroke-width="2.5" stroke-linejoin="round" /><path d="M3 25Q4 12 14 4M10 13l12-1q3 2-1 5-6 5-17 7" fill="none" stroke="#15539c" stroke-width="1.6" /><path d="M11 10q4-8 14-6 1 4-3 6-5-3-11 0z" fill="#dd2a25" /></svg>
              <span class="btext">{@render t('PRASARA', 87)}</span><span class="btext hot">{@render t('IPMS', 47)}</span>
            </div>
            <div class="hright">
              {@render t('SUNDAY, 7 JANUARY 2024', 149)}{@render ic('home', 'i14')}{@render ic('cal', 'i12')}{@render t('CALENDAR', 64)}
              <div class="user">{@render t('HI, ADMINISTRATOR!', 123)}<i class="caret"></i></div>
            </div>
          </header>
          <nav>
            {#each menu as m, n}
              <div class="mi" class:on={n === 0} class:off={n === 8}>
                <span style:width="{m[1]}px" class="mico">{@render ic(m[0], 'i14')}</span>{@render t(m[2], m[3])}
                {#if m[4]}<i class="caret" style:margin-left="{m[4]}px"></i>{/if}
              </div>
            {/each}
          </nav>
          <div class="frame">
            <div class="alert">{@render t('Logged In Successfully', 143)}<span class="shut">×</span></div>
            <div class="body">
              <hr class="lead" />
              <div class="cols">
                <div class="col">
                  {#each cards as c}
                    <div class="card {c.cls}">
                      <div class="tile">{@render ic(c.icon, 'i34')}</div>
                      <div class="cbody">
                        <h3>{@render t(c.title, c.w)}</h3>
                        <small class:link={c.link}>{@render t(c.sub, c.sw)}</small>
                        {#if c.items}<ul>{#each c.items as it}<li>{@render t(it[0], it[1])}</li>{/each}</ul>{/if}
                        {#if c.view}<ul><li>{@render ic('plusb', 'i14')}{@render t('View', 31)}</li></ul>{/if}
                      </div>
                    </div>
                    <hr />
                  {/each}
                </div>
                <div class="col">
                  <div class="phead">{@render t('Production', 121)}</div>
                  <div class="pbody">
                    <div class="group">{#each prep as s}{@render step(s, false)}{/each}</div>
                    <hr />
                    <div class="group">{#each steps as s}{@render step(s, true)}{/each}</div>
                  </div>
                </div>
                <div class="col">
                  <div class="card cyan h92">
                    <div class="tile">{@render ic('checks', 'i34')}</div>
                    <div class="cbody"><h3>{@render t('Reports', 62)}</h3><ul><li>{@render ic('plusb', 'i14')}{@render t('View', 31)}</li></ul></div>
                  </div>
                  <hr />
                  <div class="stack plum">
                    <div class="shead"><div class="sicon">{@render ic('cubes', 'cube')}</div><h4>{@render t('Inventory', 77)}</h4></div>
                    <div class="list">
                      {@render navrow('barcode', 'Style Master Data', 113)}
                      <ul class="nest"><li>{@render t('Colors', 40)}</li><li>{@render t('Sizes', 31)}</li><li>{@render t('Item Types', 70)}</li></ul>
                      {#each stock as s}{@render navrow(s[0], s[1], s[2])}{/each}
                    </div>
                  </div>
                  <div class="stack blue">
                    <div class="shead"><div class="sicon">{@render ic('cubes', 'cube')}</div><h4>{@render t('People', 55)}</h4></div>
                    <div class="list">{#each folk as s}{@render navrow(s[0], s[1], s[2])}{/each}</div>
                  </div>
                </div>
                <div class="col">
                  <div class="stack gold">
                    <div class="shead"><div class="sicon">{@render ic('flask', 'i28')}</div><h4>{@render t('Chemical Store', 121)}</h4></div>
                    <div class="tbox t1">
                      <div class="tr th">{@render t('Name', 39)}{@render t('Quantity', 59)}{@render t('Action', 43)}</div>
                      {#each chem as r}<div class="tr">{@render t(r[0], r[1])}{@render t(r[2], r[3])}{@render ic('plussq', 'i14')}</div>{/each}
                    </div>
                  </div>
                  <div class="stack fire">
                    <div class="shead"><div class="sicon">{@render ic('flask', 'i28')}</div><h4>{@render t('Chemical Sub Store', 156)}</h4></div>
                    <div class="tbox t2">
                      <div class="tr th">{@render t('Name', 39)}{@render t('Quantity', 59)}{@render t('Action', 43)}</div>
                      <div class="tr">{@render t('NOVO FIX FF', 81)}{@render t('6.4733329680699', 117)}{@render ic('plussq', 'i14')}</div>
                    </div>
                  </div>
                  <div class="stack lime">
                    <div class="shead"><div class="sicon">{@render ic('filet', 'i34')}</div><h4>{@render t('Upcoming Invoice Expirations', 238)}</h4></div>
                    <div class="tbox t3">
                      <div class="tr th">
                        <div>{@render t('Invoice', 47)}{@render t('No', 19)}</div>
                        <div>{@render t('Invoice', 47)}{@render t('Created', 51)}{@render t('Date', 31)}</div>
                        {@render t('Customer Name', 107)}{@render t('Action', 43)}
                      </div>
                      {#each invoices as r}
                        <div class="tr">
                          {@render t(r[0], 40)}<div>{@render t(r[1], 57)}{@render t(r[2], 16)}</div>
                          <div>{#each r[3] as c}{@render t(c[0], c[1])}{/each}</div>{@render ic('plussq', 'i14')}
                        </div>
                      {/each}
                    </div>
                  </div>
                </div>
              </div>
            </div>
          </div>
        </div>
        <div class="scroll"><i class="su"></i><i class="thumb"></i><i class="sd"></i></div>
      </div>
    </div>
    <footer class="task small">
      <div class="wx"><div class="wxi">{@render ic('weather', 'full')}</div><div class="wxt">{@render t('87°F', 24)}{@render t('Partly sunny', 65)}</div></div>
      {@render tray(false)}
      <div class="clock">{@render t('1:40 PM', 43)}{@render t('1/7/2024', 48)}</div>
    </footer>
  </section>
</div>

<style>
  :global(body) { margin: 0; background: #191919; }
  * { box-sizing: border-box; }
  .defs { display: block; height: 0; }
  .desk { display: flex; width: 3840px; height: 1080px; overflow: hidden; font-family: 'Open Sans', 'Noto Sans', sans-serif; }
  .screen { width: 1920px; height: 1080px; display: flex; flex-direction: column; position: relative; overflow: hidden; flex: none; }
  .t { display: inline-block; white-space: nowrap; flex: none; }
  .ic { display: block; flex: none; overflow: visible; width: 20px; height: 20px; }
  .i12 { width: 12px; height: 12px; } .i14 { width: 14px; height: 14px; } .i16 { width: 16px; height: 16px; } .i20 { width: 18px; height: 18px; }
  .i24 { width: 24px; height: 24px; } .i28 { width: 28px; height: 28px; } .i34 { width: 31px; height: 32px; } .w32 { width: 30px; height: 29px; } .cube { width: 40px; height: 32px; }
  .full { width: 100%; height: 100%; }
  .cell { display: flex; align-items: center; justify-content: center; width: 72px; flex: none; }
  .dim { color: #777; }
  .end { margin-left: auto; }
  hr { border: 0; margin: 0; height: 1px; background: #eee; }

  /* file manager */
  .left { background: #191919; color: #fff; font-size: 18px; }
  .ftabs { height: 49px; display: flex; background: #202020; padding-left: 12px; flex: none; }
  .ftab { width: 360px; display: flex; align-items: center; gap: 15px; padding: 0 20px 0 14px; color: #c8c8c8; }
  .ftab .end { color: #fff; }
  .ftab.on { background: #2c2c2c; color: #fff; font-weight: 600; border-radius: 10px 10px 0 0; margin-top: 1px; }
  .ftab.last { background: linear-gradient(#444, #444) right center / 1px 24px no-repeat; }
  .cell.plus { width: 68px; }
  .wctl { display: flex; margin-left: auto; color: #8a8a8a; height: 42px; }
  .wctl .cell { width: 70px; }
  .fnav { height: 72px; display: flex; align-items: center; background: #2c2c2c; border-bottom: 2px solid #3f3f3f; padding-left: 5px; flex: none; }
  .addr { margin-left: 9px; width: 1130px; height: 48px; border-radius: 6px; background: #383838; display: grid; grid-template-columns: 47px 43px 123px 42px 134px 20px; align-items: center; padding-left: 22px; font-size: 20px; }
  .find { margin-left: 11px; width: 460px; height: 49px; border-radius: 7px; background: #383838; display: flex; align-items: center; justify-content: space-between; padding: 0 19px 0 23px; font-size: 20px; color: #cfcfcf; }
  .ftools { height: 83px; border-bottom: 2px solid #3f3f3f; display: grid; align-items: center; padding-left: 31px; flex: none; font-size: 17.5px;
    grid-template-columns: 37px 43px 38px 4px repeat(6, 72px) 27px 38px 39px 56px 36px 44px 38px 25px 904px 37px 60px; }
  .ftools .bar { width: 1px; height: 48px; background: #3a3a3a; }
  .ftools .i16 { width: 14px; height: 14px; color: #aaa; }
  .ftools .flat { height: 19px; }
  .fmain { flex: 1; display: flex; min-height: 0; }
  aside { width: 260px; padding-left: 4px; flex: none; }
  aside hr { background: #3f3f3f; height: 2px; width: 205px; margin-left: 12px; }
  hr.top { margin-top: 23px; margin-bottom: 23px; }
  hr.mid { margin-top: 22px; margin-bottom: 24px; }
  .qrow { height: 48px; width: 226px; display: flex; align-items: center; gap: 5px; padding-left: 47px; font-size: 17.5px; padding-right: 4px; }
  .qrow.sel { background: #333; }
  .tree { height: 48px; display: grid; grid-template-columns: 35px 29px 120px; align-items: center; padding-left: 12px; font-size: 17.5px; color: #fff; }
  .tree .ic:first-child { color: #888; }
  .tree.open .ic:first-child { color: #ddd; }
  .tree.sub { grid-template-columns: 35px 28px 120px; padding-left: 25px; }
  .files { flex: 1; border-left: 3px solid #262626; }
  .fhead { display: grid; grid-template-columns: 617px 351px 293px 196px; grid-template-rows: 40px; height: 40px; margin-left: 46px; font-size: 17.5px; color: #c4c4c4; }
  .fhead > span { display: flex; align-items: center; gap: 45px; border-right: 1px solid #555; padding-left: 10px; }
  .fhead > span:first-child { padding-left: 0; }
  .fhead em { align-self: flex-start; margin-top: -5px; }
  .sizes { width: 1496px; font-size: 17.5px; text-align: right; color: #dcdcdc; padding-top: 135px; }
  .sizes p { margin: 0 0 7px; height: 40px; line-height: 40px; padding-right: 6px; }
  .sizes p:nth-child(1) { margin-bottom: 41px; }
  .sizes p:nth-child(4) { margin-bottom: 44px; }
  .sizes .pick { background: #333; }
  .fstat { height: 34px; display: flex; align-items: center; background: #1b1b1b; padding-left: 23px; font-size: 17.5px; color: #d6d6d6; flex: none; }
  .fstat > i { width: 2px; height: 17px; background: #fff; margin: 0 17px; }
  .fstat .faint { color: #aaa; margin-left: 12px; }
  .modes { margin-left: auto; display: flex; gap: 5px; align-items: center; margin-right: 12px; }
  .m1 { width: 32px; height: 34px; background: #c8c8c8; border: 5px solid #666; color: #222; padding: 3px; }
  .m2 { width: 24px; height: 25px; border: 3px solid #aaa; border-bottom-width: 6px; background: #fff; border-radius: 3px; }

  /* text editor window */
  .note { position: absolute; left: 236px; top: 228px; width: 1426px; height: 721px; border: 2px solid #434343; border-radius: 12px; background: #272727; display: flex; flex-direction: column; overflow: hidden; box-shadow: 0 14px 34px rgba(0, 0, 0, 0.5); font-size: 17.5px; }
  .ntabs { height: 60px; display: flex; background: #202020; color: #c4c4c4; flex: none; }
  .nicon { width: 71px; padding: 24px 0 0 23px; }
  .ntab { display: flex; align-items: center; height: 46px; margin-top: 14px; padding-left: 13px; }
  .ntab.first { width: 171px; gap: 17px; }
  .clip { width: 103px; overflow: hidden; }
  .ntab.first, .n0, .n1, .n2 { background: linear-gradient(#404040, #404040) right center / 1px 24px no-repeat; }
  .bullet { width: 10px; height: 10px; border-radius: 50%; background: #999; }
  .n0 { width: 171px; } .n1 { width: 169px; } .n2 { width: 171px; } .n3 { width: 171px; }
  .ntab.on { width: 170px; background: #2c2c2c; border-radius: 9px 9px 0 0; color: #fff; font-weight: 600; gap: 26px; padding-left: 12px; }
  .nplus { width: 74px; padding-top: 14px; color: #fff; }
  .nmenu { height: 48px; background: #2c2c2c; display: grid; grid-template-columns: 74px 77px 1204px 24px; padding-left: 21px; align-items: center; flex: none; font-size: 18.5px; }
  .ntext { flex: 1; padding: 51px 0 0 23px; font-family: 'DejaVu Sans Mono', monospace; font-size: 19.93px; }
  .ntext p { margin: 0; height: 25px; line-height: 25px; white-space: pre; }
  mark { background: #0078d7; color: #fff; display: inline-block; height: 25px; }
  .nstat { height: 46px; display: grid; grid-template-columns: 836px 103px 252px 100px; padding-left: 33px; align-items: center; background: #2c2c2c; color: #c8c8c8; font-size: 17.5px; flex: none;
    background-image: linear-gradient(#454545, #454545), linear-gradient(#454545, #454545), linear-gradient(#454545, #454545); background-size: 1px 24px; background-repeat: no-repeat; background-position: 852px 10px, 954px 10px, 1206px 10px; }

  /* taskbars */
  .task { display: flex; align-items: stretch; flex: none; border-top: 1px solid #4b453f; color: #fff; position: relative; background: linear-gradient(90deg, #2c2216 0%, #37261a 20%, #38282a 45%, #272323 60%, #202324 76%, #292217 90%, #2d2414 100%); }
  .big { --u: 1px; height: 72px; } .small { --u: 0.66667px; height: 48px; }
  .wx { display: flex; flex: none; }
  .big .wx { width: 337px; padding: 14px 0 0 14px; }
  .small .wx { width: 551px; padding-left: 18px; align-items: center; gap: 7px; }
  .wxi { width: 37px; height: 36px; } .small .wxi { width: 25px; height: 24px; }
  .wx b { margin: -7px 0 0 -23px; width: 34px; height: 26px; border-radius: 13px; background: #2f2f2f; font-size: 15px; font-weight: 400; text-align: center; line-height: 26px; letter-spacing: -0.5px; position: relative; }
  .wxt { display: flex; flex-direction: column; align-items: flex-start; font-size: 11.5px; line-height: 16px; }
  .wxt .t:last-child { color: #c9c2ba; }
  .dock { display: flex; align-items: center; }
  .logo { width: calc(var(--u) * 36); height: calc(var(--u) * 35); margin-right: calc(var(--u) * 19); }
  .pill { width: calc(var(--u) * 329); height: calc(var(--u) * 48); border-radius: 24px; background: #50443b; border: 1px solid #6a5c55; display: flex; align-items: center; padding-left: calc(var(--u) * 17); color: #d6cfc8; font-size: calc(var(--u) * 18); margin-right: calc(var(--u) * 4); }
  .lens { width: calc(var(--u) * 22); height: calc(var(--u) * 22); margin-right: calc(var(--u) * 16); color: #eee; }
  .case { margin-left: auto; width: calc(var(--u) * 78); height: calc(var(--u) * 40); border-radius: 20px; background: #695c53; margin-right: calc(var(--u) * 3); display: grid; place-items: center; }
  .caseicon { width: calc(var(--u) * 36); height: calc(var(--u) * 30); }
  .apps { display: flex; height: 100%; align-items: center; }
  .app { width: calc(var(--u) * 66); height: calc(var(--u) * 60); display: flex; flex-direction: column; align-items: center; padding-top: calc(var(--u) * 12); }
  .app.chrome, .app.outlook { width: calc(var(--u) * 60); margin: 0 calc(var(--u) * 3); border-radius: calc(var(--u) * 6); background: #40383a; border-top: 1px solid #4c4647; }
  .app.outlook { background: #4a2427; border-color: #5a3033; }
  .appicon { width: calc(var(--u) * 36); height: calc(var(--u) * 36); position: relative; }
  .dot { margin-top: calc(var(--u) * 6); width: calc(var(--u) * 8); height: calc(var(--u) * 5); border-radius: 3px; }
  .dot.on { background: #9a9896; }
  .outlook .dot { background: #ff99a4; }
  .dot.wide { width: calc(var(--u) * 24); background: #0b90f5; }
  .psmark { position: absolute; left: 25%; top: 17%; font-size: calc(var(--u) * 11); line-height: 1.3; }
  .hsmark { position: absolute; inset: 0; text-align: center; color: #111; font-size: calc(var(--u) * 15); line-height: calc(var(--u) * 36); letter-spacing: -1px; }
  .face { position: absolute; right: calc(var(--u) * -9); top: calc(var(--u) * -7); width: calc(var(--u) * 24); height: calc(var(--u) * 24); }
  .sys { display: grid; grid-template-columns: 45px 35px 37px 38px 73px 24px; align-items: center; margin-left: 33px; }
  .clock { display: flex; flex-direction: column; align-items: flex-end; justify-content: center; line-height: 25px; font-size: 17px; }
  .small .clock { margin-left: auto; margin-right: 23px; font-size: 11.5px; line-height: 16px; color: #ddd; }
  .bell { margin-left: 12px; position: relative; }
  .bell b { position: absolute; left: 9px; top: -3px; color: #222; font-size: 15px; line-height: 20px; }

  /* browser */
  .web { height: 1032px; display: flex; flex-direction: column; overflow: hidden; font-size: 12px; color: #fff; flex: none; }
  .wtabs { height: 40px; background: #262e3c; display: flex; align-items: center; padding-left: 6px; flex: none; }
  .drop { width: 28px; height: 28px; border-radius: 10px; background: #414e66; display: grid; place-items: center; margin-right: 3px; }
  .wtab { width: 128px; height: 16px; display: flex; align-items: center; padding-left: 10px; border-right: 2px solid #47546c; position: relative; flex: none; }
  .wtab:nth-child(13) { border-right-color: transparent; }
  .fade { width: 58px; height: 16px; margin: 0 10px 0 9px; font-size: 11.8px; line-height: 16px; -webkit-mask-image: linear-gradient(90deg, #000 65%, transparent); mask-image: linear-gradient(90deg, #000 65%, transparent); color: #e6e9ef; }
  .fade.whole { -webkit-mask-image: none; mask-image: none; }
  .ten { position: absolute; left: 12px; top: 2px; width: 12px; font-size: 8px; line-height: 11px; text-align: center; letter-spacing: -0.5px; }
  .wtab.on { width: 122px; height: 34px; margin-top: 6px; background: #414e66; border: 0; border-radius: 9px 9px 0 0; }
  .wplus { width: 42px; display: grid; place-items: center; }
  .wwin { display: flex; gap: 31px; margin-left: 61px; align-items: center; }
  .wnav { height: 41px; background: #414e66; display: flex; align-items: center; padding: 4px 0 0 15px; flex: none; gap: 22px; }
  .omni { width: 1518px; height: 34px; border-radius: 17px; background: #363d4c; display: flex; align-items: center; padding: 0 16px 0 5px; margin-left: -4px; font-size: 13.5px; flex: none; }
  .omni .path { color: #aab1bf; }
  .chip { width: 90px; height: 24px; border-radius: 12px; background: #465268; display: flex; align-items: center; gap: 4px; padding-left: 4px; margin-right: 9px; font-size: 12px; font-weight: 600; flex: none; }
  .exts { display: grid; grid-template-columns: 33px 36px 35px 18px 35px 39px 14px; align-items: center; margin-left: -1px; flex: none; }
  .exts i { width: 2px; height: 16px; background: #5b6980; }
  .whx { position: relative; }
  .whx b { position: absolute; left: 7px; top: 7px; background: #2384c5; color: #10202c; border-radius: 3px; font-size: 10px; line-height: 13px; padding: 0 2px; }
  .marks { height: 39px; background: #414e66; border-bottom: 1px solid #727b8c; display: flex; align-items: center; gap: 22px; padding-left: 11px; flex: none; box-sizing: content-box; }
  .mark { display: flex; align-items: center; gap: 6px; flex: none; }
  .mark.f { gap: 8px; }
  .mark:nth-child(2) { margin-left: -2px; } .mark:nth-child(3) { margin-left: -1px; }
  .wish, .n365 { width: 16px; height: 16px; background: #2fe36c; color: #123; font-size: 6px; line-height: 15px; text-align: center; flex: none; }
  .n365 { background: #f02a2c; color: #fff; font-size: 8.5px; letter-spacing: -0.5px; }
  .more { margin-left: auto; font-size: 19px; line-height: 20px; margin-top: -5px; }
  .mdiv { width: 2px; height: 16px; background: #2b3444; margin: 0 -7px 0 -5px; }
  .mdiv + .mark { margin-right: 14px; }
  .view { flex: 1; display: flex; min-height: 0; }
  .page { width: 1903px; background: #fff; overflow: hidden; font-family: Lato, 'Open Sans', sans-serif; flex: none; }
  header { height: 41px; background: #00599f; border-bottom: 1px solid #dc5347; display: flex; justify-content: space-between; }
  .brand { display: flex; align-items: center; padding-left: 40px; }
  .blogo { width: 30px; height: 27px; margin-right: 1px; }
  .btext { font-family: 'Open Sans', sans-serif; font-size: 20px; font-weight: 700; font-style: italic; line-height: 26px; color: #15539c; margin-right: 3px; text-shadow: 2px 0 #fff, -2px 0 #fff, 0 2px #fff, 0 -2px #fff, 1px 1px #fff, -1px -1px #fff, 1px -1px #fff, -1px 1px #fff; }
  .btext.hot { color: #dd2a25; }
  .hright { display: grid; grid-template-columns: 170px 40px 18px 82px 176px; align-items: center; font-size: 13px; font-weight: 700; margin-right: 9px; }
  .user { border: solid #2f4a68; border-width: 0 1px; height: 30px; margin-bottom: 10px; padding: 10px 0 0 19px; display: flex; align-items: center; gap: 5px; }
  .caret { width: 7px; height: 5px; background: #fff; clip-path: polygon(0 0, 100% 0, 50% 100%); flex: none; }
  nav { height: 40px; background: #000; display: flex; padding-left: 20px; font-size: 13px; font-weight: 700; }
  .mi { display: flex; align-items: center; padding: 0 10px; flex: none; }
  .mi.on { background: #05054a; } .mi.off { padding-left: 14px; }
  .mico { flex: none; }
  .frame { margin: 10px 10px 0; border: 5px solid #1c2b9b; background: #ddd; padding: 5px; box-shadow: 3px 20px 8px rgba(220, 120, 120, 0.3); }
  .alert { height: 38px; margin-right: -2px; background: #ff7518; display: flex; align-items: center; justify-content: space-between; padding: 0 18px 0 38px; font-size: 14.5px; }
  .shut { color: #c0601c; font-size: 15px; }
  .body { margin-top: 20px; background: #fff; padding-top: 20px; height: 900px; }
  .cols { display: grid; grid-template-columns: repeat(4, 436px); gap: 30px; padding: 21px 0 0 15px; align-items: start; }
  .col > hr, .pbody > hr { margin: 20px 0 21px; background: #eaeaea; }
  .card { display: flex; background: #fff; border-radius: 3px; box-shadow: 0 1px 2px rgba(0, 0, 0, 0.28); }
  .h153 { height: 153px; } .h113 { height: 113px; } .h83 { height: 83px; } .h92 { height: 92px; }
  .tile { width: 145px; padding: 28px 0 0 64px; color: #fff; flex: none; }
  .green .tile { background: linear-gradient(#02b164, #21b9ab); }
  .cyan .tile, .stile.cyan { background: linear-gradient(#00d7ea, #00bccd); }
  .red .tile, .stile.red { background: linear-gradient(#fc3a2c, #e0210f); border: 1px solid #c41a0c; }
  .amber { background: #f9bf3b; } .sky { background: #22a7f0; } .violet { background: #bf55ec; } .grey { background: #d2d7d3; } .leaf { background: #26a65b; }
  .cbody { flex: 1; padding: 18px 20px 0 21px; }
  h3 { margin: 0 0 1px; font-size: 18px; font-weight: 400; line-height: 25px; height: 24px; border-bottom: 1px solid #354f84; color: #111; }
  small { display: block; font-size: 14px; line-height: 20px; color: #b4b8c0; height: 20px; }
  small.link { color: #7b7bc0; }
  ul { margin: 0; padding: 0 0 0 25px; list-style: none; color: #1d1d8f; font-size: 14px; }
  li { height: 20px; line-height: 20px; display: flex; align-items: center; gap: 3px; position: relative; }
  li::before { content: ''; position: absolute; left: -18px; top: 7px; width: 5px; height: 5px; border-radius: 50%; background: #8d94a2; }
  .phead { height: 96px; background: linear-gradient(#383b4a, #383b4a) 0 0 / 100% 90px no-repeat, linear-gradient(#d8cfc8, #d8cfc8) 0 90px / 100% 1px no-repeat, #333646; color: #fff; font-size: 23.5px; line-height: 91px; padding-left: 16px; border-radius: 3px 3px 0 0; }
  .pbody { height: 612px; padding: 10px; box-shadow: 0 1px 3px rgba(0, 0, 0, 0.4); border-radius: 3px; }
  .group { box-shadow: 0 1px 2px rgba(0, 0, 0, 0.25); border-radius: 3px; }
  .step { height: 50px; display: flex; }
  .stile { width: 138px; display: flex; justify-content: center; padding-top: 6px; color: #fff; }
  .sbody { flex: 1; padding: 9px 10px 0; }
  .stitle { height: 23px; line-height: 24px; font-size: 18px; color: #111; border-bottom: 1px solid #354f84; padding-left: 1px; }
  .strong { font-weight: 700; }

  .stack { background: linear-gradient(90deg, var(--tile) 145px, transparent 145px); padding-bottom: 26px; box-shadow: 1px 0 1px rgba(0, 0, 0, 0.12); }
  .plum { --tile: #913d88; } .blue { --tile: #1f8bc4; } .gold { --tile: #f9bf3b; } .fire { --tile: #ff0000; } .lime { --tile: #14fe37; }
  .gold { padding-bottom: 25px; }
  .shead { display: flex; height: 58px; color: #fff; }
  .sicon { width: 145px; display: flex; justify-content: center; padding-top: 5px; }
  h4 { flex: 1; margin: 0; height: 32px; line-height: 31px; border-bottom: 1px solid #2f4f80; font-weight: 400; font-size: 18px; color: #222; padding-left: 29px; }
  .list { margin: 0 6px 0 5px; color: #555; font-size: 14.5px; }
  .navrow { height: 41px; background: #fff; border: solid #d8d8d8; border-width: 1px 1px 0; display: flex; align-items: center; gap: 8px; padding-left: 17px; }
  .navrow:first-child { border-radius: 4px 4px 0 0; height: 42px; border-bottom-width: 1px; }
  .navrow:last-child { border-bottom-width: 1px; border-radius: 0 0 4px 4px; height: 42px; }
  .ni { width: 18px; } .ni .ic { width: 16px; height: 14px; }
  .blue .navrow { border-bottom-width: 0; height: 41px; }
  .nest { margin-left: 25px; background: #fff; height: 80px; padding: 10px 0 0 16px; font-size: 14.5px; border-right: 1px solid #d8d8d8; }
  .nest li::before { left: -17px; width: 5px; }
  .tbox { margin: 0 5px; background: #fff; border: 1px solid #d8d8d8; border-radius: 4px; padding: 10px 15px 0; font-size: 14.3px; color: #f00; }
  .t1 { height: 167px; } .t2 { height: 91px; }
  .tr { display: grid; justify-items: center; align-items: center; border-top: 1px solid #d5d5d5; height: 25px; line-height: 20px; }
  .tr > .ic { color: #222; width: 13px; height: 13px; margin-bottom: 2px; }
  .tr > div { display: flex; flex-direction: column; align-items: center; }
  .th { color: #8d95a3; font-weight: 700; }
  .t1 .tr { grid-template-columns: 243px 87px 65px; }
  .t2 .tr { grid-template-columns: 134px 186px 75px; }
  .t3 .tr { grid-template-columns: 57px 73px 216px 49px; height: 45px; }
  .t3 .th { height: 65px; }
  .scroll { flex: 1; background: #f1f1f1; display: flex; flex-direction: column; align-items: center; padding: 7px 0; }
  .su { width: 8px; height: 4px; background: #888; clip-path: polygon(50% 0, 100% 100%, 0 100%); }
  .thumb { width: 14px; height: 28px; background: #c1c1c1; margin-top: 6px; }
  .sd { width: 8px; height: 4px; background: #505050; clip-path: polygon(0 0, 100% 0, 50% 100%); margin-top: auto; }
</style>
